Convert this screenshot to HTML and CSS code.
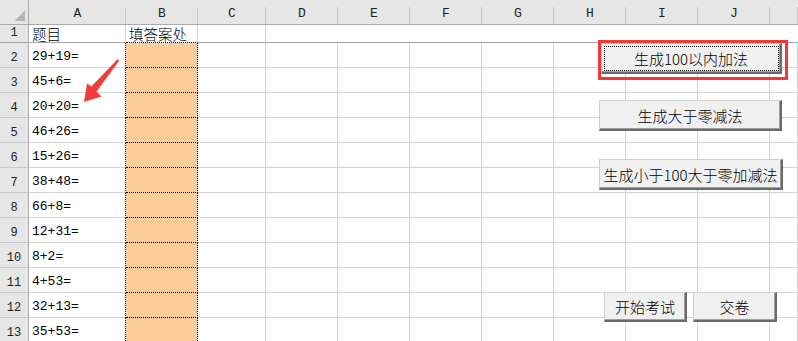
FILE: index.html
```html
<!DOCTYPE html>
<html lang="zh-CN">
  <head>
    <meta charset="UTF-8" />
    <meta name="viewport" content="width=device-width, initial-scale=1.0" />
    <title>加减法练习</title>
    <link rel="stylesheet" href="styles.css">
  </head>

  <body>
    <div class="sheet">
      <!-- column letters -->
      <div class="row head">
        <div class="corner"></div>
        <div>A</div>
        <div>B</div>
        <div>C</div>
        <div>D</div>
        <div>E</div>
        <div>F</div>
        <div>G</div>
        <div>H</div>
        <div>I</div>
        <div>J</div>
        <div></div>
      </div>

      <div class="row r1">
        <div class="rh">1</div>
        <div class="cn">题目</div>
        <div class="cn b1">填答案处</div>
        <div></div>
        <div class="wide"></div>
      </div>

      <div class="row">
        <div class="rh">2</div>
        <div class="q">29+19=</div>
        <div class="ans"></div>
        <div></div><div></div><div></div><div></div><div></div><div></div><div></div><div></div><div></div>
      </div>
      <div class="row">
        <div class="rh">3</div>
        <div class="q">45+6=</div>
        <div class="ans"></div>
        <div></div><div></div><div></div><div></div><div></div><div></div><div></div><div></div><div></div>
      </div>
      <div class="row">
        <div class="rh">4</div>
        <div class="q">20+20=</div>
        <div class="ans"></div>
        <div></div><div></div><div></div><div></div><div></div><div></div><div></div><div></div><div></div>
      </div>
      <div class="row">
        <div class="rh">5</div>
        <div class="q">46+26=</div>
        <div class="ans"></div>
        <div></div><div></div><div></div><div></div><div></div><div></div><div></div><div></div><div></div>
      </div>
      <div class="row">
        <div class="rh">6</div>
        <div class="q">15+26=</div>
        <div class="ans"></div>
        <div></div><div></div><div></div><div></div><div></div><div></div><div></div><div></div><div></div>
      </div>
      <div class="row">
        <div class="rh">7</div>
        <div class="q">38+48=</div>
        <div class="ans"></div>
        <div></div><div></div><div></div><div></div><div></div><div></div><div></div><div></div><div></div>
      </div>
      <div class="row">
        <div class="rh">8</div>
        <div class="q">66+8=</div>
        <div class="ans"></div>
        <div></div><div></div><div></div><div></div><div></div><div></div><div></div><div></div><div></div>
      </div>
      <div class="row">
        <div class="rh">9</div>
        <div class="q">12+31=</div>
        <div class="ans"></div>
        <div></div><div></div><div></div><div></div><div></div><div></div><div></div><div></div><div></div>
      </div>
      <div class="row">
        <div class="rh">10</div>
        <div class="q">8+2=</div>
        <div class="ans"></div>
        <div></div><div></div><div></div><div></div><div></div><div></div><div></div><div></div><div></div>
      </div>
      <div class="row">
        <div class="rh">11</div>
        <div class="q">4+53=</div>
        <div class="ans"></div>
        <div></div><div></div><div></div><div></div><div></div><div></div><div></div><div></div><div></div>
      </div>
      <div class="row">
        <div class="rh">12</div>
        <div class="q">32+13=</div>
        <div class="ans"></div>
        <div></div><div></div><div></div><div></div><div></div><div></div><div></div><div></div><div></div>
      </div>
      <div class="row">
        <div class="rh">13</div>
        <div class="q">35+53=</div>
        <div class="ans"></div>
        <div></div><div></div><div></div><div></div><div></div><div></div><div></div><div></div><div></div>
      </div>

      <!-- red arrow pointing at the questions -->
      <svg class="arrow" width="42" height="50" viewBox="0 0 42 50">
        <polygon points="4,47 7,28.5 11.3,31.6 37.6,4.2 39.2,5.8 16.6,36.4 21.5,41.5" fill="#f03c3c" />
      </svg>

      <!-- form buttons -->
      <div class="mark"></div>
      <button class="btn b-add focus">生成100以内加法</button>
      <button class="btn b-sub">生成大于零减法</button>
      <button class="btn b-mix">生成小于100大于零加减法</button>
      <button class="btn b-start">开始考试</button>
      <button class="btn b-hand">交卷</button>
    </div>
  </body>
</html>
```

FILE: styles.css
```css
body {
  margin: 0;
  background: #fff;
  overflow: hidden;
}

.sheet {
  position: relative;
  width: 798px;
  height: 341px;
  overflow: hidden;
  font-family: "Liberation Mono", "Noto Sans CJK SC", monospace;
  font-size: 13px;
  color: #000;
}

.row {
  display: grid;
  grid-template-columns: 29px 97px 72px 68px repeat(7, 72px) 1fr;
  height: 25px;
}

.row > div {
  box-sizing: border-box;
  border-right: 1px solid #d4d4d4;
  border-bottom: 1px solid #d4d4d4;
  display: flex;
  align-items: flex-end;
  white-space: nowrap;
}

/* column header */
.head > div {
  background: #e6e6e6 linear-gradient(#c8c8c8, #c8c8c8) no-repeat right 0 bottom 0 / 1px 17px;
  border-right: none;
  border-bottom: 1px solid #ababab;
  justify-content: center;
  padding-bottom: 3px;
  line-height: 14px;
  color: #222;
}

.head > .corner {
  background: #e6e6e6 linear-gradient(to bottom right, transparent 50%, #b4b4b4 50%) no-repeat right 3px bottom 3px / 10px 10px;
  border-right: 1px solid #ababab;
}

/* row numbers */
.rh {
  background: #e6e6e6;
  justify-content: center;
  padding-bottom: 2px;
  font-size: 12px;
  line-height: 14px;
  color: #222;
}

.row > .rh {
  border-right-color: #ababab;
  border-bottom-color: #c8c8c8;
}

/* frozen first row */
.r1 {
  height: 18px;
}

.row.r1 > div {
  border-bottom-color: #a6a6a6;
}

.cn {
  font-family: "Noto Sans CJK SC", sans-serif;
  font-weight: 300;
  font-size: 14.5px;
  line-height: 17px;
  padding-left: 3px;
}

.row.r1 > .b1 {
  border-bottom: 1px dotted #000;
}

.row > .wide {
  grid-column: span 8;
  border-right: none;
}

.row > .q {
  padding: 0 0 3px 3px;
  line-height: 15px;
  border-right: 1px dotted #000;
}

.row > .ans {
  background: #fdcc9b;
  border-right: 1px dotted #000;
  border-bottom: 1px dotted #000;
}

.arrow {
  position: absolute;
  left: 80px;
  top: 55px;
}

.mark {
  position: absolute;
  left: 598px;
  top: 40px;
  width: 190px;
  height: 40px;
  box-sizing: border-box;
  border: 3px solid #f33838;
}

.btn {
  position: absolute;
  box-sizing: border-box;
  margin: 0;
  padding: 0;
  background: #f0f0f0;
  border-top: 1px solid #d0d0d0;
  border-left: 1px solid #d0d0d0;
  border-right: 2px solid #696969;
  border-bottom: 2px solid #696969;
  box-shadow: inset -1px -1px 0 #a0a0a0;
  font-family: "Noto Sans CJK SC", sans-serif;
  font-weight: 300;
  font-size: 15px;
  color: #000;
  white-space: nowrap;
}

.focus {
  outline: 1px dotted #000;
  outline-offset: -4px;
}

.b-add {
  left: 601px;
  top: 43px;
  width: 181px;
  height: 31px;
}

.b-sub {
  left: 599px;
  top: 100px;
  width: 183px;
  height: 31px;
}

.b-mix {
  left: 599px;
  top: 159px;
  width: 184px;
  height: 31px;
}

.b-start {
  left: 604px;
  top: 292px;
  width: 83px;
  height: 30px;
}

.b-hand {
  left: 693px;
  top: 292px;
  width: 84px;
  height: 30px;
}
```
